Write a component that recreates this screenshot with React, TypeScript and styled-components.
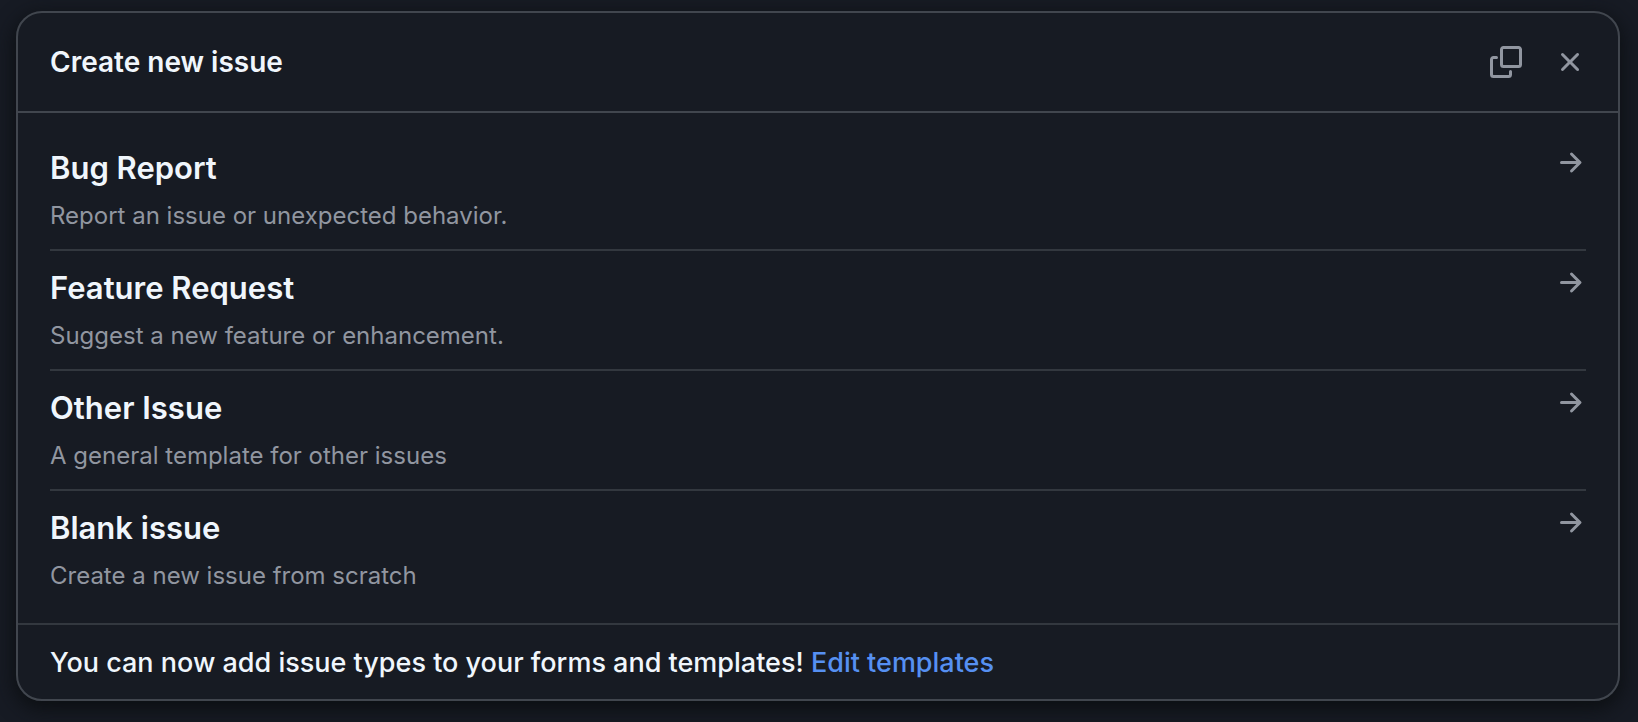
import React from "react";
import styled, { createGlobalStyle } from "styled-components";

const GlobalStyle = createGlobalStyle`
  *, *::before, *::after { box-sizing: border-box; }
  body {
    margin: 0;
    background: #171b24;
    color: #f0f6fc;
    font-family: Inter, "Liberation Sans", sans-serif;
  }
`;

const Page = styled.main`
  padding: 11px 18px 21px 16px;
`;

const Dialog = styled.section`
  display: flex;
  flex-direction: column;
  overflow: hidden;
  background: #171b23;
  border: 2px solid #41464e;
  border-radius: 26px;
`;

const Shadow = styled.div`
  border-radius: 26px;
  box-shadow: 0 6px 20px 2px #0c0f12;
`;

const Header = styled.header`
  display: flex;
  align-items: center;
  justify-content: space-between;
  padding: 32px;
  border-bottom: 2px solid #41464e;
`;

const Title = styled.h1`
  margin: 0;
  font-size: 28px;
  line-height: 34px;
  font-weight: 600;
`;

const Actions = styled.div`
  display: flex;
  gap: 32px;
`;

const IconButton = styled.button`
  display: flex;
  padding: 0;
  border: 0;
  background: none;
  color: #9196a0;
  cursor: pointer;
`;

const Icon = styled.svg`
  display: block;
  flex: none;
  width: 32px;
  height: 32px;
  fill: currentColor;
`;

const TemplateList = styled.ul`
  margin: 0;
  padding: 18px 32px 14px;
  list-style: none;
`;

const TemplateItem = styled.li`
  & + & {
    border-top: 2px solid #33383f;
  }
`;

const TemplateLink = styled.a`
  display: flex;
  align-items: flex-start;
  justify-content: space-between;
  padding: 16px 0 15px;
  color: #9196a0;
  text-decoration: none;
`;

const TemplateText = styled.div`
  display: flex;
  flex-direction: column;
  gap: 9px;
`;

const TemplateName = styled.span`
  color: #f0f6fc;
  font-size: 31px;
  line-height: 42px;
  font-weight: 600;
`;

const TemplateDescription = styled.span`
  font-size: 24px;
  line-height: 36px;
`;

const Footer = styled.footer`
  padding: 21px 32px 19px;
  border-top: 2px solid #33383f;
  font-size: 27px;
  line-height: 34px;
  font-weight: 500;
`;

const FooterLink = styled.a`
  color: #5690f2;
  text-decoration: none;
`;

const CopyIcon = () => (
  <Icon viewBox="0 0 16 16" aria-hidden="true">
    <path d="M0 6.75C0 5.784.784 5 1.75 5h1.5a.75.75 0 0 1 0 1.5h-1.5a.25.25 0 0 0-.25.25v7.5c0 .138.112.25.25.25h7.5a.25.25 0 0 0 .25-.25v-1.5a.75.75 0 0 1 1.5 0v1.5A1.75 1.75 0 0 1 9.25 16h-7.5A1.75 1.75 0 0 1 0 14.25Z" />
    <path d="M5 1.75C5 .784 5.784 0 6.75 0h7.5C15.216 0 16 .784 16 1.75v7.5A1.75 1.75 0 0 1 14.25 11h-7.5A1.75 1.75 0 0 1 5 9.25Zm1.75-.25a.25.25 0 0 0-.25.25v7.5c0 .138.112.25.25.25h7.5a.25.25 0 0 0 .25-.25v-7.5a.25.25 0 0 0-.25-.25Z" />
  </Icon>
);

const CloseIcon = () => (
  <Icon viewBox="0 0 16 16" aria-hidden="true">
    <path d="M3.72 3.72a.75.75 0 0 1 1.06 0L8 6.94l3.22-3.22a.749.749 0 0 1 1.275.326.749.749 0 0 1-.215.734L9.06 8l3.22 3.22a.749.749 0 0 1-.326 1.275.749.749 0 0 1-.734-.215L8 9.06l-3.22 3.22a.751.751 0 0 1-1.042-.018.751.751 0 0 1-.018-1.042L6.94 8 3.72 4.78a.75.75 0 0 1 0-1.06Z" />
  </Icon>
);

const ArrowIcon = () => (
  <Icon viewBox="0 0 16 16" aria-hidden="true">
    <path d="M8.22 2.97a.75.75 0 0 1 1.06 0l4.25 4.25a.75.75 0 0 1 0 1.06l-4.25 4.25a.751.751 0 0 1-1.042-.018.751.751 0 0 1-.018-1.042l2.97-2.97H3.75a.75.75 0 0 1 0-1.5h7.44L8.22 4.03a.75.75 0 0 1 0-1.06Z" />
  </Icon>
);

const templates = [
  { name: "Bug Report", description: "Report an issue or unexpected behavior." },
  { name: "Feature Request", description: "Suggest a new feature or enhancement." },
  { name: "Other Issue", description: "A general template for other issues" },
  { name: "Blank issue", description: "Create a new issue from scratch" },
];

export default function App() {
  return (
    <Page>
      <GlobalStyle />
      <Shadow>
        <Dialog role="dialog" aria-labelledby="dialog-title">
          <Header>
            <Title id="dialog-title">Create new issue</Title>
            <Actions>
              <IconButton type="button" aria-label="Copy link">
                <CopyIcon />
              </IconButton>
              <IconButton type="button" aria-label="Close">
                <CloseIcon />
              </IconButton>
            </Actions>
          </Header>
          <TemplateList>
            {templates.map((template) => (
              <TemplateItem key={template.name}>
                <TemplateLink href="#">
                  <TemplateText>
                    <TemplateName>{template.name}</TemplateName>
                    <TemplateDescription>{template.description}</TemplateDescription>
                  </TemplateText>
                  <ArrowIcon />
                </TemplateLink>
              </TemplateItem>
            ))}
          </TemplateList>
          <Footer>
            You can now add issue types to your forms and templates!{" "}
            <FooterLink href="#">Edit templates</FooterLink>
          </Footer>
        </Dialog>
      </Shadow>
    </Page>
  );
}
